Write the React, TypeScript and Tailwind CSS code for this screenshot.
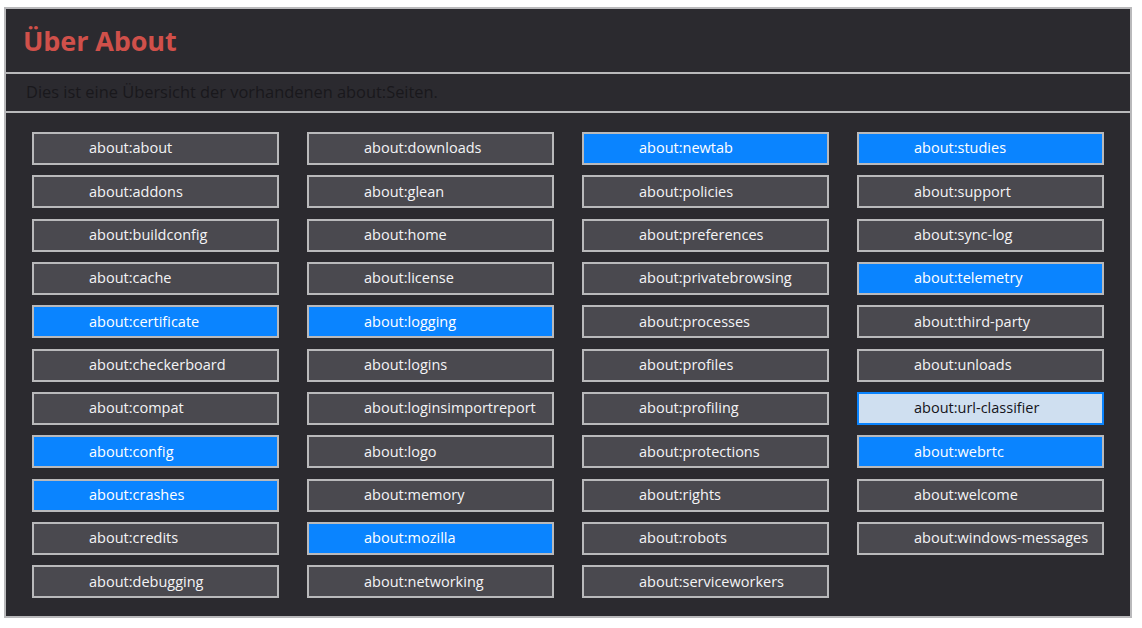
const pages: [string, 'gray' | 'blue' | 'light'][] = [
  ['about', 'gray'], ['addons', 'gray'], ['buildconfig', 'gray'], ['cache', 'gray'], ['certificate', 'blue'],
  ['checkerboard', 'gray'], ['compat', 'gray'], ['config', 'blue'], ['crashes', 'blue'], ['credits', 'gray'], ['debugging', 'gray'],
  ['downloads', 'gray'], ['glean', 'gray'], ['home', 'gray'], ['license', 'gray'], ['logging', 'blue'],
  ['logins', 'gray'], ['loginsimportreport', 'gray'], ['logo', 'gray'], ['memory', 'gray'], ['mozilla', 'blue'], ['networking', 'gray'],
  ['newtab', 'blue'], ['policies', 'gray'], ['preferences', 'gray'], ['privatebrowsing', 'gray'], ['processes', 'gray'],
  ['profiles', 'gray'], ['profiling', 'gray'], ['protections', 'gray'], ['rights', 'gray'], ['robots', 'gray'], ['serviceworkers', 'gray'],
  ['studies', 'blue'], ['support', 'gray'], ['sync-log', 'gray'], ['telemetry', 'blue'], ['third-party', 'gray'],
  ['unloads', 'gray'], ['url-classifier', 'light'], ['webrtc', 'blue'], ['welcome', 'gray'], ['windows-messages', 'gray'],
]

const styles = {
  gray: 'bg-[#4a494f] border-[#b9b9bb] text-[#f4f4f6]',
  blue: 'bg-[#0a84ff] border-[#b9b9bb] text-white',
  light: 'bg-[#cfdff0] border-[#0a84ff] text-[#15141a]',
}

export default function App() {
  return (
    <div className="min-h-screen bg-white pl-[4px] pt-[7px]" style={{ fontFamily: '"Open Sans", "Noto Sans", sans-serif' }}>
      <div className="w-[1128px] border-2 border-[#b9b9bb] bg-[#2b2a2f]">
        <div className="h-[65px] border-b-2 border-[#b9b9bb] pl-[17px] flex items-center">
          <h1 className="text-[27px] font-bold text-[#d0504a] leading-none tracking-[-0.1px]">Über About</h1>
        </div>
        <div className="h-[39px] border-b-2 border-[#b9b9bb] pl-[20px] flex items-center">
          <p className="text-[16.4px] text-[#19181c]">Dies ist eine Übersicht der vorhandenen about:Seiten.</p>
        </div>
        <div className="pl-[26px] pt-[19px] pb-[18px]">
          <div className="grid grid-flow-col grid-rows-[repeat(11,33px)] grid-cols-[repeat(4,247px)] gap-x-[28px] gap-y-[10.33px]">
            {pages.map(([name, kind]) => (
              <a key={name} href={`about:${name}`}
                className={`border-2 pl-[55px] flex items-center text-[14.5px] leading-none ${styles[kind]}`}>
                about:{name}
              </a>
            ))}
          </div>
        </div>
      </div>
    </div>
  )
}
